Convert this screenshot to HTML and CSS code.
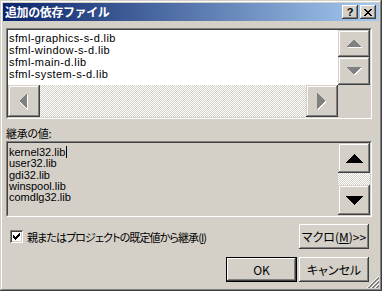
FILE: index.html
```html
<!DOCTYPE html>
<html lang="ja">
<head>
<meta charset="UTF-8">
<title>追加の依存ファイル</title>
<link rel="stylesheet" href="styles.css">
</head>
<body>

<div class="window">
    <div class="titlebar">
        <span class="title">追加の依存ファイル</span>
        <div class="caption-btns">
            <div class="cbtn">?</div>
            <div class="cbtn">
                <svg width="8" height="7" viewBox="0 0 8 7" shape-rendering="crispEdges">
                    <path d="M0 0h2v1h-2zM6 0h2v1h-2zM1 1h2v1h-2zM5 1h2v1h-2zM2 2h4v1h-4zM3 3h2v1h-2zM2 4h4v1h-4zM1 5h2v1h-2zM5 5h2v1h-2zM0 6h2v1h-2zM6 6h2v1h-2z" fill="#000"/>
                </svg>
            </div>
        </div>
    </div>

    <div class="client">
        <!-- list of additional files -->
        <div class="sunken list-box">
            <div class="inner list-grid">
                <div class="list-items">
                    <div>sfml-graphics-s-d.lib</div>
                    <div>sfml-window-s-d.lib</div>
                    <div>sfml-main-d.lib</div>
                    <div>sfml-system-s-d.lib</div>
                </div>
                <div class="vscroll">
                    <div class="sbtn">
                        <svg width="16" height="9" viewBox="0 0 16 9" shape-rendering="crispEdges">
                            <polygon points="1,9 8.5,1.5 16,9" fill="#fff"/>
                            <polygon points="0,8 7.5,0.5 15,8" fill="#808080"/>
                        </svg>
                    </div>
                    <div class="sbtn">
                        <svg width="16" height="9" viewBox="0 0 16 9" shape-rendering="crispEdges">
                            <polygon points="1,1 16,1 8.5,8.5" fill="#fff"/>
                            <polygon points="0,0 15,0 7.5,7.5" fill="#808080"/>
                        </svg>
                    </div>
                </div>
                <div class="hscroll">
                    <div class="sbtn">
                        <svg width="10" height="19" viewBox="0 0 10 19" shape-rendering="crispEdges">
                            <polygon points="1,10 9,2 9,19" fill="#fff"/>
                            <polygon points="0,9 8,1 8,17" fill="#808080"/>
                        </svg>
                    </div>
                    <div class="track"></div>
                    <div class="sbtn">
                        <svg width="10" height="19" viewBox="0 0 10 19" shape-rendering="crispEdges">
                            <polygon points="1,2 9,10 1,18" fill="#fff"/>
                            <polygon points="0,1 8,9 0,17" fill="#808080"/>
                        </svg>
                    </div>
                </div>
                <div class="corner"></div>
            </div>
        </div>

        <div class="label">継承の値:</div>

        <!-- inherited values -->
        <div class="sunken inherit-box">
            <div class="inner inherit-grid">
                <div class="inherit-items">
                    <div>kernel32.lib<span class="caret"></span></div>
                    <div>user32.lib</div>
                    <div>gdi32.lib</div>
                    <div>winspool.lib</div>
                    <div>comdlg32.lib</div>
                </div>
                <div class="vscroll2">
                    <div class="sbtn">
                        <svg width="17" height="9" viewBox="0 0 17 9" shape-rendering="crispEdges">
                            <polygon points="0,9 8.5,0 17,9" fill="#000"/>
                        </svg>
                    </div>
                    <div class="track"></div>
                    <div class="sbtn">
                        <svg width="17" height="9" viewBox="0 0 17 9" shape-rendering="crispEdges">
                            <polygon points="0,0 17,0 8.5,9" fill="#000"/>
                        </svg>
                    </div>
                </div>
            </div>
        </div>

        <div class="option-row">
            <label class="check">
                <span class="checkbox">
                    <svg width="7" height="7" viewBox="0 0 7 7" shape-rendering="crispEdges">
                        <path d="M6 0h1v3h-1zM5 1h1v3h-1zM4 2h1v3h-1zM3 3h1v3h-1zM2 4h1v3h-1zM1 3h1v3h-1zM0 2h1v3h-1z" fill="#000"/>
                    </svg>
                </span>
                <span>親またはプロジェクトの既定値から継承(<u>I</u>)</span>
            </label>
            <div class="btn">マクロ(<u>M</u>)&gt;&gt;</div>
        </div>

        <div class="button-row">
            <div class="btn default">OK</div>
            <div class="btn">キャンセル</div>
        </div>
    </div>

    <svg class="grip" width="13" height="13" viewBox="0 0 13 13">
        <path d="M13 1L1 13M13 5L5 13M13 9L9 13" stroke="#fff" stroke-width="1"/>
        <path d="M13 2L2 13M13 3L3 13M13 6L6 13M13 7L7 13M13 10L10 13M13 11L11 13" stroke="#808080" stroke-width="1"/>
    </svg>
</div>

</body>
</html>
```

FILE: styles.css
```css
/* Win2000 style dialog */
body {
    margin: 0;
    background: #d4d0c8;
    font-family: 'Liberation Sans', 'Noto Sans CJK JP', sans-serif;
    font-size: 12px;
    color: #000;
}
.window {
    position: relative;
    width: 382px;
    height: 291px;
    box-sizing: border-box;
    padding: 3px;
    background: #d4d0c8;
    box-shadow: inset -1px -1px #404040, inset 1px 1px #d4d0c8,
                inset -2px -2px #808080, inset 2px 2px #fff;
}

/* Title bar */
.titlebar {
    height: 18px;
    display: flex;
    align-items: center;
    justify-content: space-between;
    padding-left: 2px;
    background: linear-gradient(to right, #0a246a, #a6caf0);
}
.title {
    color: #fff;
    font-family: 'Noto Sans CJK JP', sans-serif;
    font-weight: 700;
    font-size: 12px;
    letter-spacing: -0.4px;
    line-height: 18px;
}
.caption-btns {
    display: flex;
    gap: 2px;
    margin-right: 3px;
}
.cbtn {
    width: 16px;
    height: 14px;
    box-sizing: border-box;
    display: flex;
    align-items: center;
    justify-content: center;
    background: #d4d0c8;
    font-family: 'Liberation Sans', sans-serif;
    font-weight: 700;
    font-size: 11px;
    line-height: 14px;
    box-shadow: inset -1px -1px #404040, inset 1px 1px #fff,
                inset -2px -2px #808080, inset 2px 2px #d4d0c8;
}

.client {
    padding: 7px 7px 0 3px;
}

/* sunken 3d frames */
.sunken {
    box-sizing: border-box;
    border: 1px solid;
    border-color: #808080 #fff #fff #808080;
}
.inner {
    height: 100%;
    box-sizing: border-box;
    border: 1px solid;
    border-color: #404040 #d4d0c8 #d4d0c8 #404040;
}

.sbtn {
    display: flex;
    align-items: center;
    justify-content: center;
    background: #d4d0c8;
    box-shadow: inset -1px -1px #404040, inset 1px 1px #d4d0c8,
                inset -2px -2px #808080, inset 2px 2px #fff;
}
.track {
    background: repeating-conic-gradient(#fff 0 25%, #d4d0c8 0 50%) 0 0 / 2px 2px;
}

/* top list */
.list-box {
    height: 91px;
}
.list-grid {
    display: grid;
    grid-template-columns: 1fr 32px;
    grid-template-rows: 55px 32px;
}
.list-items {
    background: #fff;
    padding: 2px 0 0 1px;
    line-height: 12px;
    font-size: 11px;
    letter-spacing: 0.4px;
    overflow: hidden;
}
.vscroll {
    display: grid;
    grid-template-rows: 27px 28px;
}
.hscroll {
    display: grid;
    grid-template-columns: 32px 1fr 32px;
}
.corner {
    background: #d4d0c8;
}

.label {
    margin: 7px 0 1px;
    line-height: 14px;
    font-family: 'Noto Sans CJK JP', sans-serif;
    font-size: 11px;
    letter-spacing: -0.3px;
    font-feature-settings: "palt";
}

/* inherited values */
.inherit-box {
    height: 76px;
}
.inherit-grid {
    display: grid;
    grid-template-columns: 1fr 32px;
}
.inherit-items {
    padding: 3px 0 0 1px;
    font-size: 11px;
    line-height: 11.25px;
}
.caret {
    display: inline-block;
    width: 1px;
    height: 12px;
    margin-left: 1px;
    background: #000;
    vertical-align: -2px;
}
.vscroll2 {
    display: grid;
    grid-template-rows: 30px 1fr 30px;
}

/* bottom controls */
.option-row {
    margin-top: 7px;
    display: flex;
    align-items: center;
    justify-content: space-between;
    padding: 0 3px 0 4px;
}
.check {
    display: flex;
    align-items: center;
    gap: 4px;
    font-family: 'Noto Sans CJK JP', sans-serif;
    font-size: 11px;
    letter-spacing: -0.9px;
    font-feature-settings: "palt";
}
.checkbox {
    width: 13px;
    height: 13px;
    box-sizing: border-box;
    display: flex;
    align-items: center;
    justify-content: center;
    background: #fff;
    box-shadow: inset 1px 1px #808080, inset -1px -1px #fff,
                inset 2px 2px #404040, inset -2px -2px #d4d0c8;
}
.btn {
    width: 70px;
    height: 25px;
    box-sizing: border-box;
    display: flex;
    align-items: center;
    justify-content: center;
    background: #d4d0c8;
    font-family: 'Noto Sans CJK JP', sans-serif;
    font-size: 12px;
    font-feature-settings: "palt";
    box-shadow: inset -1px -1px #404040, inset 1px 1px #fff,
                inset -2px -2px #808080, inset 2px 2px #d4d0c8;
}
.btn.default {
    width: 71px;
    border: 1px solid #000;
}
.button-row {
    margin-top: 8px;
    display: flex;
    justify-content: flex-end;
    gap: 2px;
    padding-right: 3px;
}

.grip {
    position: absolute;
    right: 3px;
    bottom: 3px;
}
```
